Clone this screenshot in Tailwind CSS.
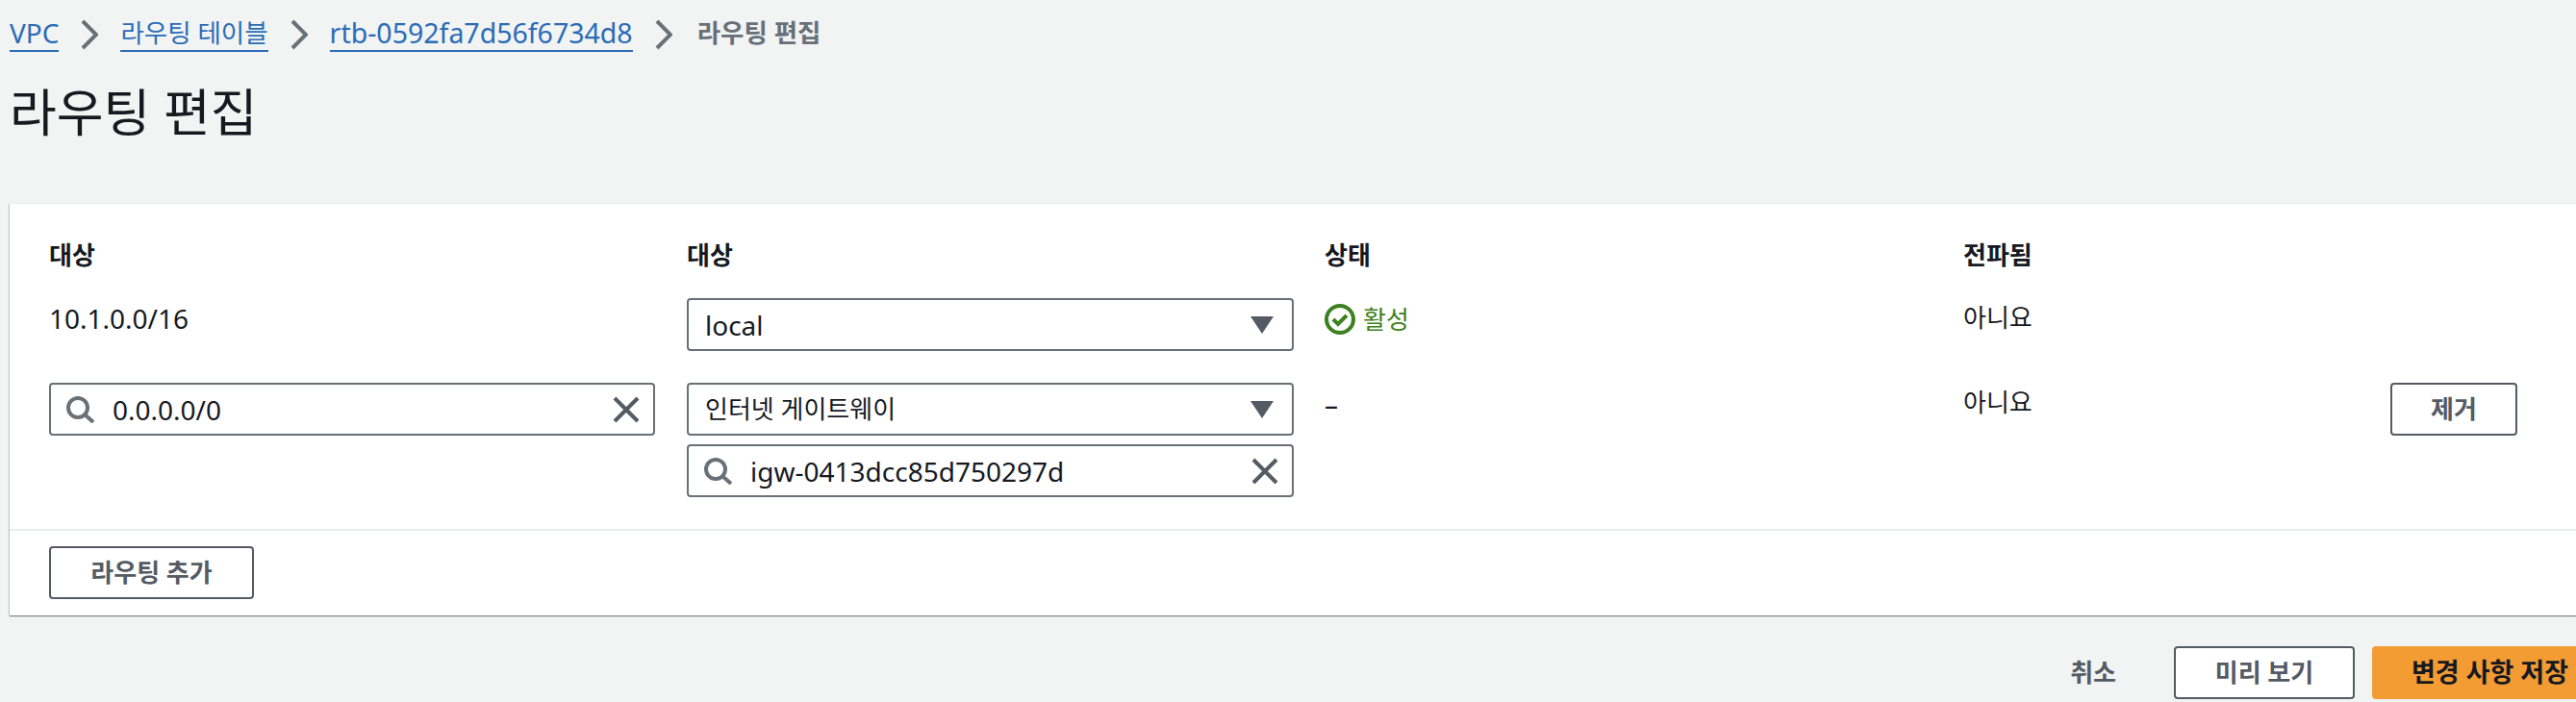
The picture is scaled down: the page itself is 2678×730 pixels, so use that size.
<!DOCTYPE html>
<html lang="ko">
<head>
    <meta charset="UTF-8">
    <title>라우팅 편집</title>
    <script src="https://cdn.jsdelivr.net/npm/@tailwindcss/browser@4"></script>
</head>
<body class="w-[2678px] h-[730px] overflow-hidden bg-[#f2f3f3] text-[#16191f] text-[26px] font-['Noto_Sans','Noto_Sans_CJK_KR',sans-serif]">
    <!-- breadcrumb -->
    <nav class="h-[72px] pl-[10px] pt-[16px] flex items-start text-[#2a6cb7]">
        <a class="h-[38px] text-[28px] leading-[36px] border-b-[2px] border-[#2a6cb7]">VPC</a>
        <svg class="w-[18px] h-[32px] mt-[4px] mx-[23px]" viewBox="0 0 18 32" fill="none" stroke="#687078" stroke-width="4"><path d="M2 2l14 14L2 30"/></svg>
        <a class="h-[38px] text-[26.5px] leading-[36px] border-b-[2px] border-[#2a6cb7]">라우팅 테이블</a>
        <svg class="w-[18px] h-[32px] mt-[4px] mx-[23px]" viewBox="0 0 18 32" fill="none" stroke="#687078" stroke-width="4"><path d="M2 2l14 14L2 30"/></svg>
        <a class="h-[38px] text-[28.5px] leading-[36px] border-b-[2px] border-[#2a6cb7]">rtb-0592fa7d56f6734d8</a>
        <svg class="w-[18px] h-[32px] mt-[4px] ml-[23px] mr-[26px]" viewBox="0 0 18 32" fill="none" stroke="#687078" stroke-width="4"><path d="M2 2l14 14L2 30"/></svg>
        <span class="text-[26.5px] leading-[36px] text-[#687078] font-semibold">라우팅 편집</span>
    </nav>

    <h1 class="h-[140px] pl-[10px] pt-[10px] text-[53px] leading-[70px] font-normal">라우팅 편집</h1>

    <!-- route table card -->
    <section class="ml-[10px] h-[428px] bg-white shadow-[0_1px_1px_0_rgba(0,28,36,0.5),-1px_0_1px_0_rgba(0,28,36,0.15)]">
        <div class="h-[338px] pl-[41px] pt-[33px] grid grid-cols-[663px_663px_664px_1fr] grid-rows-[65px_88px_auto]">
            <div class="font-bold leading-[40px]">대상</div>
            <div class="font-bold leading-[40px]">대상</div>
            <div class="font-bold leading-[40px]">상태</div>
            <div class="font-bold leading-[40px]">전파됨</div>

            <div class="text-[28px] leading-[40px] pt-[1px]">10.1.0.0/16</div>
            <div>
                <div class="w-[631px] h-[55px] pl-[17px] pr-[18px] flex items-center justify-between bg-white border-[2px] border-[#687078] rounded-[4px]">
                    <span class="text-[28px]">local</span>
                    <svg class="w-[26px] h-[20px]" viewBox="0 0 26 20" fill="#545b64"><path d="M1 1h24L13 19z"/></svg>
                </div>
            </div>
            <div class="flex items-center h-[40px] mt-[2px] gap-[8px] text-[#3c8020]">
                <svg class="w-[32px] h-[32px]" viewBox="0 0 32 32" fill="none" stroke="#3c8020"><circle cx="16" cy="16" r="14" stroke-width="4"/><path d="M9 16l5 5 9-9" stroke-width="4"/></svg>
                <span>활성</span>
            </div>
            <div class="leading-[40px]">아니요</div>

            <div class="flex justify-between items-start">
                <div class="w-[630px] h-[55px] pl-[16px] pr-[14px] flex items-center bg-white border-[2px] border-[#687078] rounded-[4px]">
                    <svg class="w-[30px] h-[28px] mr-[18px]" viewBox="0 0 30 28" fill="none" stroke="#687078" stroke-width="4"><circle cx="12" cy="12" r="10"/><path d="M19 19l9 8"/></svg>
                    <span class="flex-1 text-[28px]">0.0.0.0/0</span>
                    <svg class="w-[28px] h-[28px]" viewBox="0 0 28 28" fill="none" stroke="#545b64" stroke-width="4"><path d="M2 2l24 24M26 2L2 26"/></svg>
                </div>
            </div>
            <div class="flex flex-col gap-[9px]">
                <div class="w-[631px] h-[55px] pl-[17px] pr-[18px] flex items-center justify-between bg-white border-[2px] border-[#687078] rounded-[4px]">
                    <span>인터넷 게이트웨이</span>
                    <svg class="w-[26px] h-[20px]" viewBox="0 0 26 20" fill="#545b64"><path d="M1 1h24L13 19z"/></svg>
                </div>
                <div class="w-[631px] h-[55px] pl-[16px] pr-[14px] flex items-center bg-white border-[2px] border-[#687078] rounded-[4px]">
                    <svg class="w-[30px] h-[28px] mr-[18px]" viewBox="0 0 30 28" fill="none" stroke="#687078" stroke-width="4"><circle cx="12" cy="12" r="10"/><path d="M19 19l9 8"/></svg>
                    <span class="flex-1 text-[28px]">igw-0413dcc85d750297d</span>
                    <svg class="w-[28px] h-[28px]" viewBox="0 0 28 28" fill="none" stroke="#545b64" stroke-width="4"><path d="M2 2l24 24M26 2L2 26"/></svg>
                </div>
            </div>
            <div class="text-[28px] leading-[40px] pt-[2px]">–</div>
            <div class="flex items-start">
                <div class="w-[444px] leading-[40px]">아니요</div>
                <button class="w-[132px] h-[55px] bg-white border-[2px] border-[#545b64] rounded-[4px] text-[#545b64] font-bold">제거</button>
            </div>
        </div>
        <div class="h-[90px] pl-[41px] pt-[16px] border-t-[2px] border-[#eaeded]">
            <button class="w-[213px] h-[55px] bg-white border-[2px] border-[#545b64] rounded-[4px] text-[#545b64] font-bold">라우팅 추가</button>
        </div>
    </section>

    <!-- page actions -->
    <footer class="mt-[32px] mr-[-33px] flex justify-end items-center">
        <span class="mr-[60px] text-[#545b64] font-bold">취소</span>
        <button class="w-[188px] h-[55px] mr-[18px] bg-white border-[2px] border-[#545b64] rounded-[4px] text-[#545b64] font-bold">미리 보기</button>
        <button class="w-[245px] h-[55px] bg-[#f29c33] rounded-[4px] text-[#16191f] text-[27px] font-bold">변경 사항 저장</button>
    </footer>
</body>
</html>
